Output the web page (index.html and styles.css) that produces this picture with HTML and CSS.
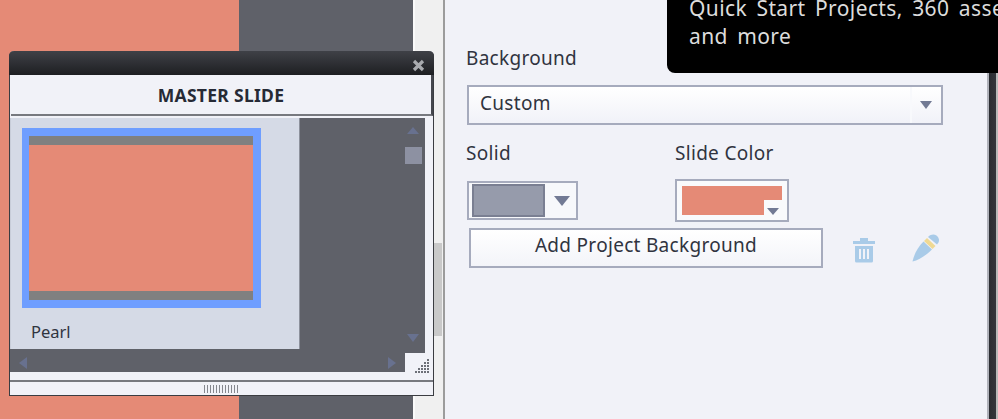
FILE: index.html
```html
<!DOCTYPE html>
<html lang="en">
<head>
    <meta charset="UTF-8">
    <title>Master Slide</title>
    <link rel="stylesheet" href="styles.css">
</head>
<body>
    <div class="stage">
        <div class="stage-slide"></div>
        <div class="stage-dark"></div>
    </div>

    <div class="gutter">
        <div class="gutter-thumb"></div>
    </div>

    <div class="panel">
        <div class="field-label background-label">Background</div>
        <div class="select">
            <span class="select-value">Custom</span>
            <span class="select-cell"><span class="arrow arrow-select"></span></span>
        </div>

        <div class="color-row">
            <div class="color-col solid-col">
                <div class="field-label">Solid</div>
                <div class="solid-picker">
                    <div class="solid-swatch"></div>
                    <span class="arrow"></span>
                </div>
            </div>
            <div class="color-col">
                <div class="field-label">Slide Color</div>
                <div class="slide-picker">
                    <div class="slide-swatch">
                        <div class="slide-notch"><span class="arrow arrow-small"></span></div>
                    </div>
                </div>
            </div>
        </div>

        <div class="button-row">
            <button class="add-button">Add Project Background</button>
            <svg class="trash-icon" width="24" height="26" viewBox="0 0 24 26">
                <path d="M8 1h8v3h7v3H1V4h7z" fill="#a9cbe8"/>
                <path fill-rule="evenodd" d="M3 9h18v15a1.500 1.500 0 0 1-1.500 1.500h-15A1.500 1.500 0 0 1 3 24zM7 12v10h2V12zM11 12v10h2V12zM15 12v10h2V12z" fill="#a9cbe8"/>
            </svg>
            <svg class="pencil-icon" width="28" height="28" viewBox="0 0 28 28">
                <path d="M0.500 27.500 C2 21 5 14 11.500 7.500 L20 15.500 C14 21.500 7 26 0.500 27.500z" fill="#a9cbe8"/>
                <path d="M12 7 L15 4 L23.500 12 L20.500 15z" fill="#efd993"/>
                <path d="M16 3 C19 0 22 0 24.500 1.500 C27.500 4 28 7.500 25 10.500z" fill="#a9cbe8"/>
            </svg>
        </div>
    </div>

    <div class="right-edge"></div>

    <div class="tooltip">
        <div>Quick Start Projects, 360 assets</div>
        <div>and more</div>
    </div>

    <div class="window">
        <div class="window-title">
            <svg class="close-icon" width="13" height="13" viewBox="0 0 13 13">
                <path d="M2 2l9 9M11 2l-9 9" stroke="#a9abaf" stroke-width="3.200" fill="none"/>
            </svg>
        </div>
        <div class="window-header">MASTER SLIDE</div>
        <div class="window-body">
            <div class="scroll-top">
                <div class="slide-list">
                    <div class="thumb">
                        <div class="thumb-strip"></div>
                        <div class="thumb-fill"></div>
                        <div class="thumb-strip"></div>
                    </div>
                    <div class="thumb-name">Pearl</div>
                </div>
                <div class="vscroll">
                    <span class="tri tri-up"></span>
                    <span class="vscroll-handle"></span>
                    <span class="tri tri-down"></span>
                </div>
            </div>
            <div class="hscroll">
                <span class="tri tri-left"></span>
                <span class="tri tri-right"></span>
            </div>
            <svg class="resize-grip" width="18" height="18" viewBox="0 0 18 18">
                <g fill="#6d7078">
                    <rect x="14" y="1" width="2" height="2"/>
                    <rect x="11" y="4" width="2" height="2"/><rect x="14" y="4" width="2" height="2"/>
                    <rect x="8" y="7" width="2" height="2"/><rect x="11" y="7" width="2" height="2"/><rect x="14" y="7" width="2" height="2"/>
                    <rect x="5" y="10" width="2" height="2"/><rect x="8" y="10" width="2" height="2"/><rect x="11" y="10" width="2" height="2"/><rect x="14" y="10" width="2" height="2"/>
                    <rect x="2" y="13" width="2" height="2"/><rect x="5" y="13" width="2" height="2"/><rect x="8" y="13" width="2" height="2"/><rect x="11" y="13" width="2" height="2"/><rect x="14" y="13" width="2" height="2"/>
                </g>
            </svg>
        </div>
        <div class="window-footer"><span class="footer-grip"></span></div>
    </div>
</body>
</html>
```

FILE: styles.css
```css
html, body {
    height: 419px;
}

body {
    margin: 0;
    display: flex;
    overflow: hidden;
    position: relative;
    background-color: #f1f2f8;
    font-family: "Noto Sans", sans-serif;
    color: #30343f;
}

.stage {
    display: flex;
    width: 413px;
    flex-shrink: 0;
}

.stage-slide {
    width: 239px;
    background-color: #e58a76;
}

.stage-dark {
    flex: 1;
    background-color: #5f6169;
}

.gutter {
    width: 32px;
    flex-shrink: 0;
    box-sizing: border-box;
    padding-top: 243px;
    padding-left: 19px;
    background-color: #f0f0f0;
    border-left: 2px solid #fafafa;
    border-right: 2px solid #9c9c9c;
}

.gutter-thumb {
    width: 8px;
    height: 93px;
    background-color: #c9c9c9;
}

.panel {
    flex: 1;
    padding-left: 21px;
    padding-right: 10px;
}

.field-label {
    font-size: 19px;
    letter-spacing: 0.3px;
    line-height: 20px;
}

.background-label {
    margin-top: 48px;
}

.arrow {
    display: block;
    width: 0;
    height: 0;
    border-left: 8px solid transparent;
    border-right: 8px solid transparent;
    border-top: 10px solid #727a94;
}

.arrow-select {
    border-left-width: 6.500px;
    border-right-width: 6.500px;
    border-top-width: 8px;
}

.arrow-small {
    border-left-width: 6px;
    border-right-width: 6px;
    border-top-width: 7px;
}

.select {
    display: flex;
    justify-content: space-between;
    box-sizing: border-box;
    width: 476px;
    height: 40px;
    margin: 17px 0 0 1px;
    padding-left: 11px;
    border: 2px solid #a6abbd;
    background: linear-gradient(#ffffff, #f1f2f8);
    font-size: 19px;
    letter-spacing: 0.3px;
}

.select-value {
    line-height: 32px;
}

.select-cell {
    display: flex;
    justify-content: flex-end;
    box-sizing: border-box;
    width: 31px;
    padding: 14px 9px 0 0;
    border-left: 2px solid #f8f9fc;
}

.color-row {
    display: flex;
    margin-top: 18px;
}

.solid-col {
    width: 209px;
}

.solid-picker {
    display: flex;
    align-items: center;
    justify-content: space-between;
    box-sizing: border-box;
    width: 111px;
    height: 39px;
    margin: 18px 0 0 1px;
    padding: 0 6px 0 3px;
    border: 2px solid #a6abbd;
    background-color: #f7f8fb;
}

.solid-swatch {
    box-sizing: border-box;
    width: 73px;
    height: 33px;
    background-color: #969bab;
    border: 2px solid #7a7f92;
}

.slide-picker {
    box-sizing: border-box;
    width: 114px;
    height: 43px;
    margin-top: 16px;
    padding: 5px;
    border: 2px solid #a6abbd;
    background-color: #f9fafc;
}

.slide-swatch {
    display: flex;
    justify-content: flex-end;
    align-items: flex-end;
    width: 100px;
    height: 29px;
    background-color: #e58a76;
}

.slide-notch {
    display: flex;
    justify-content: center;
    box-sizing: border-box;
    width: 18px;
    height: 15px;
    padding-top: 8px;
    background-color: #f9fafc;
}

.button-row {
    display: flex;
    align-items: flex-start;
    margin: 6px 0 0 3px;
}

.add-button {
    box-sizing: border-box;
    width: 354px;
    height: 40px;
    padding: 0 0 6px;
    border: 2px solid #a6abbd;
    background: linear-gradient(#ffffff, #f3f4f9);
    font-family: inherit;
    font-size: 19px;
    letter-spacing: 0.3px;
    color: #30343f;
}

.trash-icon {
    margin: 9px 0 0 29px;
}

.pencil-icon {
    margin: 6px 0 0 36px;
}

.right-edge {
    position: absolute;
    top: 0;
    right: 0;
    width: 11px;
    height: 419px;
    background: linear-gradient(90deg, #b0b2ba 0, #b0b2ba 2px, #2a2c31 2px, #33353b 9px, #b8b8b8 9px);
}

.tooltip {
    position: absolute;
    top: -6px;
    left: 667px;
    right: 0;
    height: 79px;
    box-sizing: border-box;
    padding-left: 22px;
    border-bottom-left-radius: 8px;
    background-color: #000;
    color: #dcdcdc;
    font-size: 21px;
    letter-spacing: 0.4px;
    word-spacing: 3.500px;
    line-height: 28px;
    white-space: nowrap;
    overflow: hidden;
}

.window {
    position: absolute;
    top: 51px;
    left: 9px;
    width: 425px;
    height: 345px;
    box-sizing: border-box;
    display: flex;
    flex-direction: column;
    border: 1px solid #3b3d42;
    border-top: none;
    border-radius: 5px 5px 0 0;
    background-color: #f1f2f8;
}

.window-title {
    display: flex;
    justify-content: flex-end;
    align-items: center;
    flex-shrink: 0;
    height: 24px;
    margin: 0 -1px;
    padding-right: 9px;
    border-radius: 5px 5px 0 0;
    background: linear-gradient(#3f4147, #1e1f22);
}

.close-icon {
    margin-top: 4px;
}

.window-header {
    flex-shrink: 0;
    height: 41px;
    box-sizing: border-box;
    margin: 0 0 2px 1px;
    padding-top: 10px;
    border-right: 2px solid #45474d;
    border-bottom: 2px solid #77797f;
    text-align: center;
    font-size: 17.500px;
    letter-spacing: 0.3px;
    line-height: 20px;
    font-weight: bold;
    color: #262a35;
}

.window-body {
    position: relative;
    height: 262px;
    flex-shrink: 0;
}

.scroll-top {
    display: flex;
    justify-content: space-between;
    width: 415px;
    height: 235px;
    background-color: #5f6169;
}

.slide-list {
    box-sizing: border-box;
    width: 290px;
    height: 231px;
    padding: 10px 0 0 11px;
    border-left: 1px solid #c8cdd9;
    border-right: 1px solid #8d919c;
    background-color: #d5dae6;
}

.thumb {
    display: flex;
    flex-direction: column;
    width: 224px;
    height: 164px;
    border: solid #6f9eff;
    border-width: 8px 8px 8px 7px;
}

.thumb-strip {
    height: 9px;
    background-color: #808080;
}

.thumb-fill {
    flex: 1;
    background-color: #e58a76;
}

.thumb-name {
    margin: 14px 0 0 9px;
    font-size: 16.500px;
    line-height: 20px;
}

.vscroll {
    display: flex;
    flex-direction: column;
    align-items: center;
    width: 20px;
    margin-right: 2px;
    padding-top: 9px;
}

.vscroll-handle {
    width: 17px;
    height: 17px;
    margin-top: 13px;
    background-color: #8d91a2;
}

.tri {
    display: block;
    width: 0;
    height: 0;
}

.tri-up {
    border-left: 6px solid transparent;
    border-right: 6px solid transparent;
    border-bottom: 7px solid #68718f;
}

.tri-down {
    margin-top: 170px;
    border-left: 6px solid transparent;
    border-right: 6px solid transparent;
    border-top: 8px solid #68718f;
}

.hscroll {
    display: flex;
    align-items: center;
    justify-content: space-between;
    box-sizing: border-box;
    width: 395px;
    height: 19px;
    padding: 0 9px;
    background-color: #5f6169;
}

.tri-left {
    border-top: 6px solid transparent;
    border-bottom: 6px solid transparent;
    border-right: 8px solid #68718f;
}

.tri-right {
    border-top: 6px solid transparent;
    border-bottom: 6px solid transparent;
    border-left: 8px solid #68718f;
}

.resize-grip {
    position: absolute;
    right: 2px;
    bottom: 4px;
}

.window-footer {
    display: flex;
    justify-content: center;
    align-items: center;
    flex: 1;
    border-top: 2px solid #77797f;
}

.footer-grip {
    width: 36px;
    height: 8px;
    background: repeating-linear-gradient(90deg, #85878e 0, #85878e 1.500px, transparent 1.500px, transparent 3px);
}
```
